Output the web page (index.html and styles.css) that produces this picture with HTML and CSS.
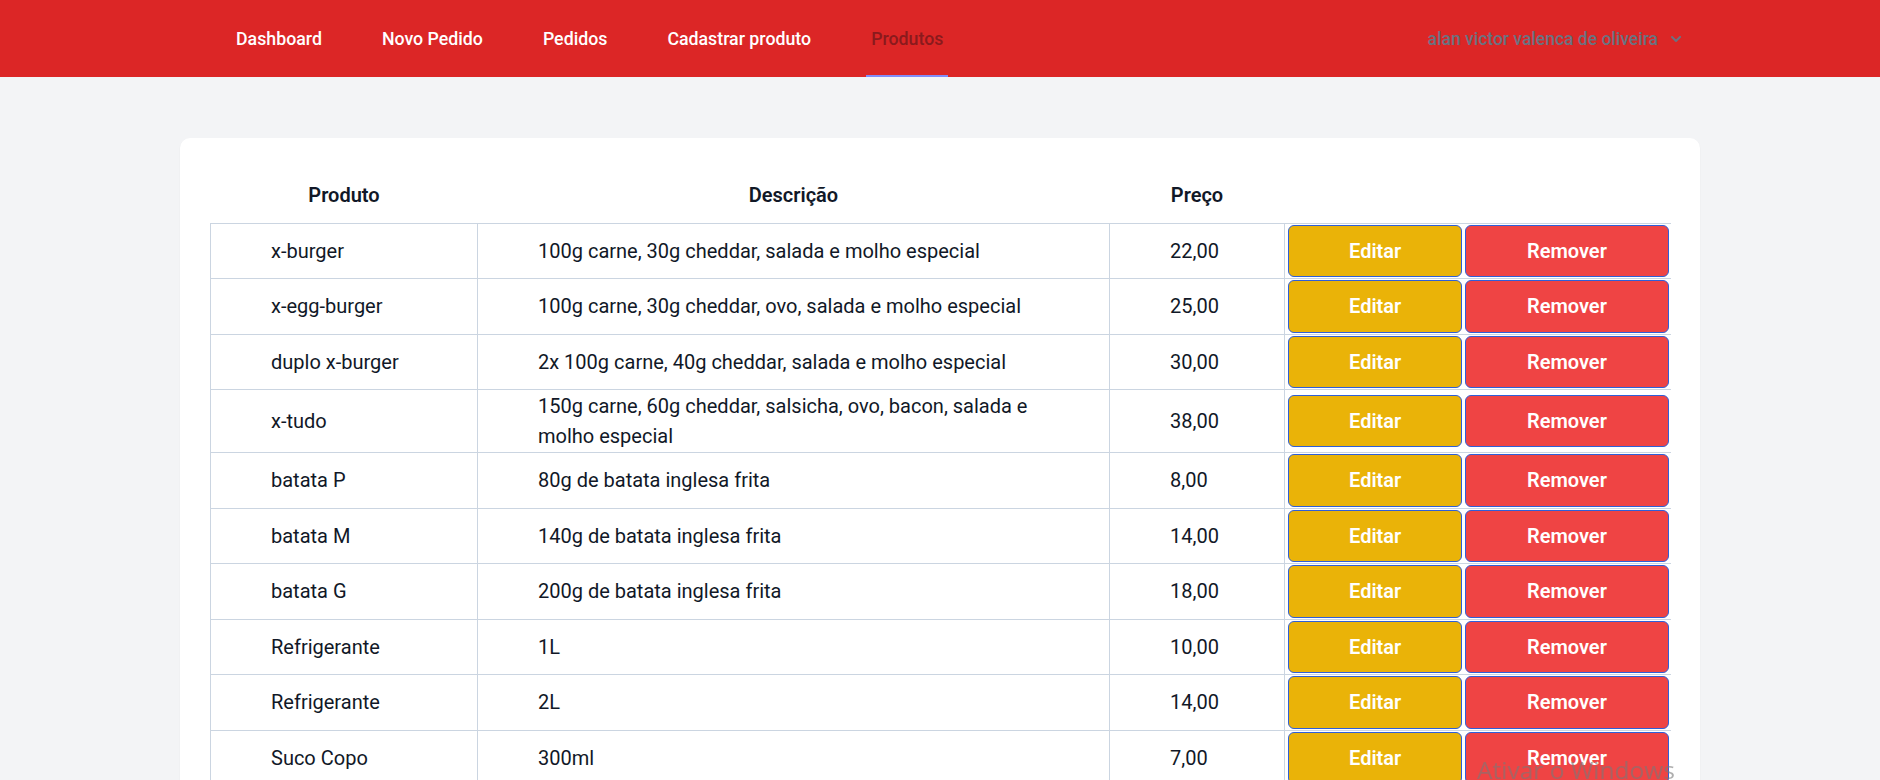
FILE: index.html
```html
<!DOCTYPE html>
<html lang="pt-BR">
<head>
<meta charset="utf-8">
<title>Produtos</title>
<link rel="stylesheet" href="styles.css">
</head>
<body>
<header class="topbar">
  <div class="topbar-inner">
    <nav class="nav">
      <a class="nav-link" href="#">Dashboard</a>
      <a class="nav-link" href="#">Novo Pedido</a>
      <a class="nav-link" href="#">Pedidos</a>
      <a class="nav-link" href="#">Cadastrar produto</a>
      <a class="nav-link active" href="#">Produtos</a>
    </nav>
    <div class="user">
      <span>alan victor valenca de oliveira</span>
      <svg class="chevron" viewBox="0 0 20 20" width="20" height="20"><path d="M5.3 7.3a1 1 0 0 1 1.4 0L10 10.6l3.3-3.3a1 1 0 1 1 1.4 1.4l-4 4a1 1 0 0 1-1.4 0l-4-4a1 1 0 0 1 0-1.4z" fill="currentColor"/></svg>
    </div>
  </div>
</header>
<main class="page">
  <div class="card">
    <table class="products">
      <colgroup>
        <col class="c-name"><col class="c-desc"><col class="c-price"><col class="c-actions">
      </colgroup>
      <thead>
        <tr><th>Produto</th><th>Descrição</th><th>Preço</th><th></th></tr>
      </thead>
      <tbody>
        <tr><td>x-burger</td><td>100g carne, 30g cheddar, salada e molho especial</td><td>22,00</td><td class="actions"><div class="btns"><button class="btn edit">Editar</button><button class="btn remove">Remover</button></div></td></tr>
        <tr><td>x-egg-burger</td><td>100g carne, 30g cheddar, ovo, salada e molho especial</td><td>25,00</td><td class="actions"><div class="btns"><button class="btn edit">Editar</button><button class="btn remove">Remover</button></div></td></tr>
        <tr><td>duplo x-burger</td><td>2x 100g carne, 40g cheddar, salada e molho especial</td><td>30,00</td><td class="actions"><div class="btns"><button class="btn edit">Editar</button><button class="btn remove">Remover</button></div></td></tr>
        <tr><td>x-tudo</td><td>150g carne, 60g cheddar, salsicha, ovo, bacon, salada e molho especial</td><td>38,00</td><td class="actions"><div class="btns"><button class="btn edit">Editar</button><button class="btn remove">Remover</button></div></td></tr>
        <tr><td>batata P</td><td>80g de batata inglesa frita</td><td>8,00</td><td class="actions"><div class="btns"><button class="btn edit">Editar</button><button class="btn remove">Remover</button></div></td></tr>
        <tr><td>batata M</td><td>140g de batata inglesa frita</td><td>14,00</td><td class="actions"><div class="btns"><button class="btn edit">Editar</button><button class="btn remove">Remover</button></div></td></tr>
        <tr><td>batata G</td><td>200g de batata inglesa frita</td><td>18,00</td><td class="actions"><div class="btns"><button class="btn edit">Editar</button><button class="btn remove">Remover</button></div></td></tr>
        <tr><td>Refrigerante</td><td>1L</td><td>10,00</td><td class="actions"><div class="btns"><button class="btn edit">Editar</button><button class="btn remove">Remover</button></div></td></tr>
        <tr><td>Refrigerante</td><td>2L</td><td>14,00</td><td class="actions"><div class="btns"><button class="btn edit">Editar</button><button class="btn remove">Remover</button></div></td></tr>
        <tr><td>Suco Copo</td><td>300ml</td><td>7,00</td><td class="actions"><div class="btns"><button class="btn edit">Editar</button><button class="btn remove">Remover</button></div></td></tr>
      </tbody>
    </table>
  </div>
</main>
<div class="watermark">Ativar o Windows</div>
</body>
</html>
```
FILE: styles.css
```css
* { box-sizing: border-box; }
body {
  margin: 0;
  background: #f3f4f6;
  font-family: Roboto, "Liberation Sans", sans-serif;
  color: #111827;
}
.topbar {
  background: #dc2626;
  height: 77px;
}
.topbar-inner {
  width: 1600px;
  margin: 0 auto;
  padding: 0 40px;
  height: 100%;
  display: flex;
  justify-content: space-between;
}
.nav {
  display: flex;
  gap: 50px;
  margin-left: 51px;
  height: 100%;
}
.nav-link {
  display: flex;
  align-items: center;
  padding: 0 5px;
  border-top: 2px solid transparent;
  border-bottom: 2px solid transparent;
  font-size: 17.75px;
  font-weight: 500;
  color: #ffffff;
  text-decoration: none;
}
.nav-link.active {
  color: #8a1a1d;
  border-bottom-color: #818cf8;
}
.user {
  display: flex;
  align-items: center;
  gap: 8px;
  padding-right: 14px;
  color: #6b7280;
  font-size: 17.5px;
  font-weight: 500;
}
.chevron { display: block; }
.page {
  padding-top: 61px;
}
.card {
  width: 1520px;
  margin: 0 auto;
  background: #ffffff;
  border-radius: 10px;
  padding: 30px;
  box-shadow: 0 1px 2px rgba(0,0,0,0.05);
}
.products {
  width: 1460px;
  table-layout: fixed;
  border-collapse: collapse;
  font-size: 20px;
  line-height: 30px;
}
.c-name { width: 267px; }
.c-desc { width: 632px; }
.c-price { width: 175px; }
.c-actions { width: 386px; }
.products th {
  height: 55px;
  padding: 0;
  font-weight: 600;
  text-align: center;
  color: #111827;
}
.products td {
  border: 1px solid #cbd5e1;
  padding: 1px 60px;
  vertical-align: middle;
  color: #111827;
}
.products td.actions {
  padding: 1px 2px 1px 3px;
  border-right: 0;
}
.btns {
  display: flex;
  gap: 3px;
}
.btn {
  height: 52.5px;
  border: 1px solid #2f5fd8;
  border-radius: 6px;
  color: #ffffff;
  font-family: inherit;
  font-size: 20px;
  font-weight: 600;
  display: flex;
  align-items: center;
  justify-content: center;
  padding: 0;
}
.btn.edit { width: 175px; background: #eab308; }
.btn.remove { width: 204px; background: #ef4444; }
.watermark {
  position: fixed;
  left: 1477px;
  top: 753px;
  font-family: "Open Sans", sans-serif;
  font-size: 24.5px;
  line-height: 34px;
  color: rgba(120, 120, 120, 0.6);
  pointer-events: none;
}
```
